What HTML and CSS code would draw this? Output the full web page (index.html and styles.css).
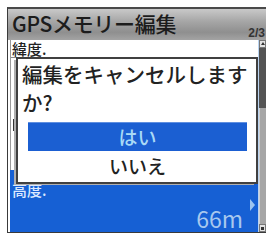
FILE: index.html
```html
<!DOCTYPE html>
<html lang="ja">
<head>
<meta charset="utf-8">
<link rel="stylesheet" href="styles.css">
</head>
<body>
<div class="screen">
  <div class="titlebar">
    <span class="title">GPSメモリー編集</span>
    <span class="page">2/3</span>
  </div>
  <div class="body">
    <div class="list">
      <div class="item item-first">
        <div class="label label-white">緯度.</div>
      </div>
      <div class="item item-second">
        <div class="glyph-stub"></div>
      </div>
      <div class="item item-selected">
        <div class="label">高度.</div>
        <div class="value"><span>66m</span><span class="arrow"></span></div>
      </div>
    </div>
    <div class="scrollbar">
      <div class="sb-btn sb-up"></div>
      <div class="sb-track"></div>
      <div class="sb-thumb"></div>
      <div class="sb-btn sb-down"></div>
    </div>
  </div>
  <div class="dialog">
    <div class="message">編集をキャンセルします<br>か?</div>
    <div class="option option-selected">はい</div>
    <div class="option">いいえ</div>
  </div>
</div>
</body>
</html>
```
FILE: styles.css
```css
* { box-sizing: border-box; }
html, body { margin: 0; padding: 0; background: #fff; }
body {
  font-family: "Noto Sans CJK JP", "Noto Sans", sans-serif;
  width: 268px;
  height: 237px;
  overflow: hidden;
}
.screen {
  position: relative;
  margin: 7px 0 0 7px;
  width: 259px;
  height: 226px;
  border-left: 1px solid #3a3a3a;
  border-top: 2px solid #4a4a4a;
  border-bottom: 1px solid #3a3a3a;
  display: flex;
  flex-direction: column;
}
.titlebar {
  position: relative;
  height: 31px;
  flex: none;
  background: linear-gradient(180deg, #c9c9c9 0%, #a6a6a6 40%, #8f8f8f 75%, #a3a3a3 100%);
  padding-left: 4px;
  display: flex;
  align-items: center;
}
.title {
  font-size: 21px;
  font-weight: 500;
  line-height: 28px;
  color: #1c1c1c;
  margin-top: -3px;
  letter-spacing: -0.3px;
}
.page {
  position: absolute;
  right: 1px;
  bottom: 1px;
  font-family: "Liberation Sans", sans-serif;
  font-weight: bold;
  font-size: 12px;
  line-height: 12px;
  color: #333;
}
.body {
  flex: 1;
  display: flex;
  min-height: 0;
}
.list {
  flex: 1;
  display: flex;
  flex-direction: column;
  padding-left: 2px;
  background: #fff;
  border-right: 1px solid #b9d3f0;
}
.item {
  height: 65px;
  flex: none;
  border-left: 1px solid #9a9a9a;
}
.item-second { padding: 14px 0 0 2px; }
.glyph-stub {
  width: 3px;
  height: 12px;
  border-left: 2px solid #333;
  border-top: 1px solid #333;
  border-bottom: 1px solid #333;
}
.label {
  font-size: 15px;
  font-weight: 500;
  line-height: 17px;
  height: 17px;
  color: #222;
  padding-left: 1px;
}
.label-white {
  border-bottom: 1px solid #8a8a8a;
  height: 18px;
}
.item-selected {
  flex: 1;
  height: auto;
  border-left: none;
  background: #1660d4;
  padding-top: 11px;
  display: flex;
  flex-direction: column;
}
.item-selected .label {
  color: #dbe9ff;
  padding-left: 2px;
}
.value {
  flex: 1;
  display: flex;
  justify-content: flex-end;
  align-items: center;
  padding-right: 3px;
  font-size: 23px;
  color: #a8c8ee;
  line-height: 26px;
}
.value span:first-child { margin-top: 6px; }
.arrow {
  width: 0;
  height: 0;
  border-top: 6px solid transparent;
  border-bottom: 6px solid transparent;
  border-left: 5px solid #9cc4f0;
  margin-left: 7px;
  margin-top: -20px;
}
.scrollbar {
  width: 7px;
  flex: none;
  display: flex;
  flex-direction: column;
  background: #a8a8a8;
}
.sb-btn {
  height: 8px;
  flex: none;
  background: #e2e2e2;
  border: 1px solid #777;
  position: relative;
}
.sb-up::after {
  content: "";
  position: absolute;
  left: 1px;
  top: 1px;
  border-left: 2px solid transparent;
  border-right: 2px solid transparent;
  border-bottom: 3px solid #333;
}
.sb-down::after {
  content: "";
  position: absolute;
  left: 1px;
  top: 2px;
  width: 3px;
  height: 3px;
  background: #333;
}
.sb-track {
  height: 60px;
  flex: none;
  background: #545454;
}
.sb-thumb {
  flex: 1;
  background: #a6a6a6;
  border-left: 1px solid #d0d0d0;
}
.dialog {
  position: absolute;
  left: 8px;
  top: 48px;
  width: 242px;
  height: 127px;
  background: #fff;
  border: 2px solid #404040;
  box-shadow: -3px 2px 0 -1px #b0b0b0;
}
.message {
  font-size: 20.5px;
  font-weight: 500;
  line-height: 28px;
  color: #222;
  padding: 1px 0 0 4px;
  white-space: nowrap;
}
.option {
  height: 29px;
  margin: 0 9px 0 10px;
  font-size: 19px;
  font-weight: 500;
  line-height: 29px;
  text-align: center;
  color: #222;
}
.option-selected {
  margin-top: 6px;
  background: #1b5fd2;
  color: #a9daf6;
  border-top: 1px solid #5f8fe0;
  line-height: 27px;
}
```
